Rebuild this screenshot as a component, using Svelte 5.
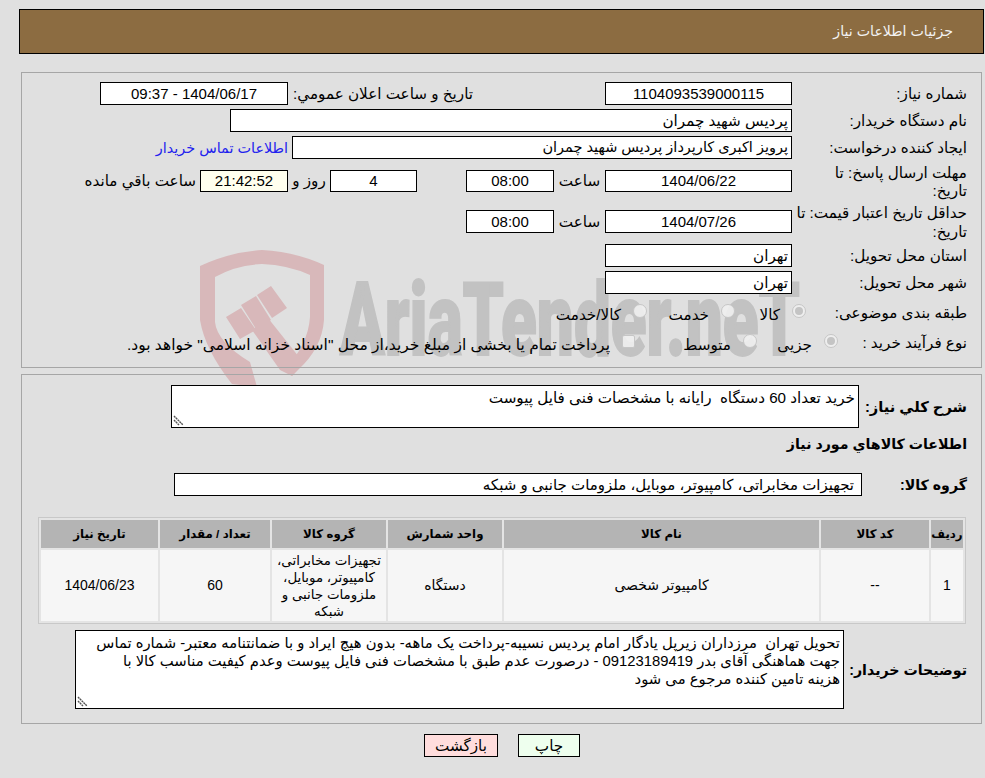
<script>
  const summary = 'خرید تعداد 60 دستگاه  رایانه با مشخصات فنی فایل پیوست';
  const notes = 'تحویل تهران  مرزداران زیرپل یادگار امام پردیس نسیبه-پرداخت یک ماهه- بدون هیچ ایراد و با ضمانتنامه معتبر- شماره تماس جهت هماهنگی آقای بدر 09123189419 - درصورت عدم طبق با مشخصات فنی فایل پیوست وعدم کیفیت مناسب کالا با\nهزینه تامین کننده مرجوع می شود';
  const heads = ['ردیف', 'کد کالا', 'نام کالا', 'واحد شمارش', 'گروه کالا', 'تعداد / مقدار', 'تاریخ نیاز'];
  const cells = ['1', '--', 'کامپیوتر شخصی', 'دستگاه', 'تجهیزات مخابراتی، کامپیوتر، موبایل، ملزومات جانبی و شبکه', '60', '1404/06/23'];
</script>

{#snippet grip()}
  <svg class="grip" viewBox="0 0 11 11" aria-hidden="true">
    <path d="M1 1 L10 10 M1 5 L6 10" />
  </svg>
{/snippet}

<div class="page" dir="rtl">
  <svg class="mark" viewBox="0 0 985 778" aria-hidden="true">
    <path class="red" d="M262 250 Q296 252 324 265 L324 320 Q322 348 298 370 L292 376 L285 369 Q308 345 310 317 L310 275 Q288 265 262 264 Q236 265 215 277 L215 322 Q217 342 250 362 L257 387 L232 384 Q205 350 200 320 L200 266 Q230 252 262 250 Z" />
    <path class="red" d="M226 317 L241 308 L256 330 L240 339 Z M241 305 L256 296 L271 320 L256 329 Z M257 295 L271 286 L287 308 L272 318 Z M252 330 L268 318 L303 362 L292 376 L280 370 Z" />
    <text class="brand" x="340" y="355" textLength="460" lengthAdjust="spacingAndGlyphs">AriaTender.neT</text>
  </svg>

  <header class="title"><span>جزئیات اطلاعات نیاز</span></header>

  <section class="panel first">
    <div class="row plain">
      <div class="label">شماره نیاز:</div>
      <div class="box b187 center">1104093539000115</div>
      <div class="label announce">تاریخ و ساعت اعلان عمومي:</div>
      <div class="box b188 center">1404/06/17 - 09:37</div>
    </div>
    <div class="row plain">
      <div class="label">نام دستگاه خریدار:</div>
      <div class="box b562">پردیس شهید چمران</div>
    </div>
    <div class="row plain">
      <div class="label">ایجاد کننده درخواست:</div>
      <div class="box b500 tight">پرویز اکبری کارپرداز پردیس شهید چمران</div>
      <a class="contact" href="#contact">اطلاعات تماس خریدار</a>
    </div>
    <div class="row r36">
      <div class="label">مهلت ارسال پاسخ: تا تاریخ:</div>
      <div class="box b187 center">1404/06/22</div>
      <div class="unit">ساعت</div>
      <div class="box b88 center">08:00</div>
      <div class="box b87 center day">4</div>
      <div class="unit days">روز و</div>
      <div class="box b88 center clock">21:42:52</div>
      <div class="left">ساعت باقي مانده</div>
    </div>
    <div class="row r37">
      <div class="label">حداقل تاریخ اعتبار قیمت: تا تاریخ:</div>
      <div class="box b187 center">1404/07/26</div>
      <div class="unit">ساعت</div>
      <div class="box b88 center">08:00</div>
    </div>
    <div class="row plain">
      <div class="label">استان محل تحویل:</div>
      <div class="box b187">تهران</div>
    </div>
    <div class="row plain">
      <div class="label">شهر محل تحویل:</div>
      <div class="box b187">تهران</div>
    </div>
    <div class="row opt">
      <div class="label l161">طبقه بندی موضوعی:</div>
      <label class="choice w71"><i class="radio on"></i>کالا</label>
      <label class="choice w88"><i class="radio"></i>خدمت</label>
      <label class="choice"><i class="radio"></i>کالا/خدمت</label>
    </div>
    <div class="row opt">
      <div class="label l129">نوع فرآیند خرید :</div>
      <label class="choice w81"><i class="radio on"></i>جزیی</label>
      <label class="choice w122"><i class="radio"></i>متوسط</label>
      <label class="choice long"><i class="square"></i>پرداخت تمام یا بخشی از مبلغ خرید،از محل "اسناد خزانه اسلامی" خواهد بود.</label>
    </div>
  </section>

  <section class="panel second">
    <div class="row topalign">
      <div class="label strong wide l108">شرح كلي نیاز:</div>
      <div class="areawrap">
        <textarea class="area a1" readonly value={summary}></textarea>
        {@render grip()}
      </div>
    </div>
    <h2>اطلاعات كالاهاي مورد نیاز</h2>
    <div class="row group">
      <div class="label strong l105">گروه کالا:</div>
      <div class="box b688 groupbox">تجهیزات مخابراتی، کامپیوتر، موبایل، ملزومات جانبی و شبکه</div>
    </div>
    <table>
      <thead>
        <tr>{#each heads as h}<th>{h}</th>{/each}</tr>
      </thead>
      <tbody>
        <tr>{#each cells as c}<td>{c}</td>{/each}</tr>
      </tbody>
    </table>
    <div class="row notes">
      <div class="label strong l123">توضیحات خریدار:</div>
      <div class="areawrap">
        <textarea class="area a2" readonly value={notes}></textarea>
        {@render grip()}
      </div>
    </div>
  </section>

  <div class="actions">
    <button class="print">چاپ</button>
    <button class="back">بازگشت</button>
  </div>
</div>

<style>
  :global(body) {
    margin: 0;
    background: #e0e0e0;
    font-family: "Liberation Sans", "DejaVu Sans", sans-serif;
    font-size: 15.2px;
    color: #000;
  }
  .page {
    position: relative;
    height: 778px;
    overflow: hidden;
    padding-top: 9px;
    box-sizing: border-box;
  }
  .mark {
    position: absolute;
    left: 0;
    top: 0;
    width: 985px;
    height: 778px;
    pointer-events: none;
    direction: ltr;
  }
  .red { fill: #d8b8ba; }
  .brand {
    direction: ltr;
    font-family: "Roboto", sans-serif;
    font-weight: 900;
    font-size: 102px;
    fill: #c2c2c2;
    stroke: #c2c2c2;
    stroke-width: 2px;
  }
  .title {
    position: relative;
    box-sizing: border-box;
    height: 45px;
    margin: 0 1px 0 19px;
    background: #8c6c41;
    border: 1px solid #000;
    color: #f2f2f2;
    font-size: 14.2px;
    display: flex;
    align-items: center;
    padding-right: 30px;
    padding-bottom: 1px;
  }
  .panel {
    position: relative;
    box-sizing: border-box;
    margin: 0 3px 0 21px;
    border: 1px solid #a6a6a6;
    padding-right: 14px;
  }
  .first { margin-top: 18px; height: 296px; padding-top: 9px; }
  .second { margin-top: 6px; height: 350px; padding-top: 10px; }
  .row { display: flex; align-items: center; }
  .plain { height: 23px; margin-bottom: 4px; }
  .r36 { height: 36px; margin-bottom: 4px; }
  .r37 { height: 37px; margin-bottom: 4px; }
  .opt { height: 30px; }
  .label {
    box-sizing: border-box;
    width: 175px;
    padding-left: 8px;
    line-height: 18px;
    flex: none;
  }
  .r36 .label { padding-top: 2px; line-height: 18.4px; }
  .r37 .label { padding-top: 2px; padding-left: 0; line-height: 18.4px; }
  .l161 { width: 161px; padding-left: 0; }
  .l129 { width: 129px; padding-left: 0; }
  .l108 { width: 108px; padding-left: 0; }
  .l105 { width: 105px; padding-left: 0; }
  .l123 { width: 123px; padding-left: 0; }
  .strong, h2 { font-weight: bold; font-size: 14.2px; }
  .wide { font-size: 14.7px; }
  .announce { width: 185px; padding: 0; margin-right: 132px; white-space: nowrap; }
  .box {
    box-sizing: border-box;
    height: 23px;
    flex: none;
    background: #fff;
    border: 1px solid #000;
    padding: 0 3px;
    line-height: 21px;
    white-space: nowrap;
  }
  .r36 .box { height: 22px; line-height: 20px; }
  .center { text-align: center; font-size: 15px; }
  .tight { font-size: 14.5px; }
  .b187 { width: 187px; }
  .b188 { width: 188px; }
  .b562 { width: 562px; }
  .b500 { width: 500px; }
  .b88 { width: 88px; }
  .b87 { width: 87px; }
  .b688 { width: 688px; }
  .contact { color: #2222ee; text-decoration: none; margin-right: 4px; white-space: nowrap; font-size: 14.4px; }
  .unit { width: 51px; text-align: center; flex: none; }
  .day { margin-right: 49px; }
  .days { width: 42px; }
  .clock { background: #ffffee; }
  .left { margin-right: 4px; white-space: nowrap; }
  .choice { display: flex; align-items: center; flex: none; white-space: nowrap; padding-top: 4px; }
  .long { font-size: 15.5px; }
  .w71 { width: 71px; }
  .w88 { width: 88px; }
  .w81 { width: 81px; }
  .w122 { width: 122px; }
  .radio {
    box-sizing: border-box;
    width: 14px;
    height: 14px;
    margin-left: 12px;
    margin-top: -8px;
    border-radius: 50%;
    border: 1px solid #c6c6c6;
    background: rgba(240, 240, 240, 0.9);
    display: flex;
    align-items: center;
    justify-content: center;
    flex: none;
  }
  .radio.on::after {
    content: "";
    width: 8px;
    height: 8px;
    border-radius: 50%;
    background: #c4c4c4;
  }
  .square {
    box-sizing: border-box;
    width: 13px;
    height: 13px;
    margin-left: 12px;
    margin-top: -8px;
    border: 1px solid #c6c6c6;
    border-radius: 2px;
    background: rgba(240, 240, 240, 0.9);
    flex: none;
  }
  .areawrap { position: relative; flex: none; }
  .grip {
    position: absolute;
    left: 2px;
    bottom: 2px;
    width: 11px;
    height: 11px;
    fill: none;
    stroke: #555;
    stroke-width: 1.4;
    stroke-dasharray: 2 0.6;
  }
  .area {
    display: block;
    box-sizing: border-box;
    margin: 0;
    padding: 3px 3px 1px;
    border: 1px solid #000;
    border-radius: 0;
    background: #fff;
    font: 15.2px/18px "Liberation Sans", "DejaVu Sans", sans-serif;
    color: #000;
    outline: none;
    resize: none;
  }
  .a1 { width: 688px; height: 43px; }
  .a2 { width: 769px; height: 79px; font-size: 14.8px; }
  h2 { margin: 6px 0 0; height: 20px; line-height: 20px; }
  .group { height: 23px; margin-top: 19px; }
  .groupbox { padding-right: 7px; font-size: 15px; }
  table {
    display: table;
    position: relative;
    table-layout: fixed;
    box-sizing: border-box;
    width: 928px;
    height: 107px;
    margin: 21px 1px 0 0;
    border: 1px solid #c8c8c8;
    border-spacing: 2px;
    background: #e4e4e4;
  }
  th, td { padding: 0; text-align: center; vertical-align: middle; }
  th {
    height: 28px;
    background: #b4b4b4;
    font-size: 11.8px;
    font-weight: bold;
  }
  td { height: 71px; background: #f6f6f6; line-height: 17px; font-size: 14px; }
  td:nth-child(5) { font-size: 13.4px; }
  th:nth-child(1) { width: 32px; }
  th:nth-child(2) { width: 108px; }
  th:nth-child(3) { width: 315px; }
  th:nth-child(4) { width: 114px; }
  th:nth-child(5) { width: 114px; }
  th:nth-child(6) { width: 110px; }
  th:nth-child(7) { width: 117px; }
  .notes { margin-top: 6px; }
  .actions {
    position: relative;
    display: flex;
    justify-content: flex-start;
    gap: 20px;
    margin: 10px 405px 0 0;
  }
  button {
    box-sizing: border-box;
    height: 23px;
    padding: 0;
    border: 1px solid #000;
    border-radius: 0;
    font: 15.2px "Liberation Sans", "DejaVu Sans", sans-serif;
    color: #000;
  }
  .print { width: 62px; background: #eeffee; }
  .back { width: 74px; background: #ffdddd; }
</style>
